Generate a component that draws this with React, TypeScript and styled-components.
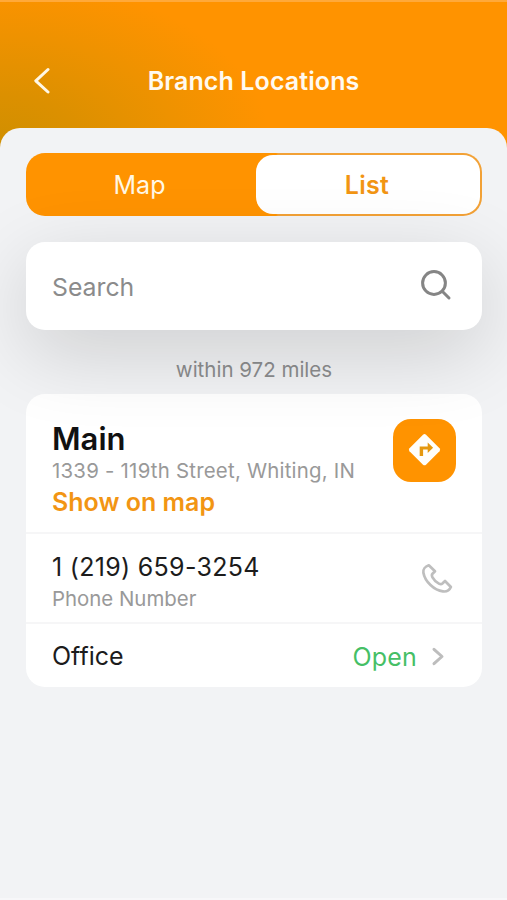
import React from "react";
import styled, { createGlobalStyle } from "styled-components";

const ORANGE = "#ff9300";

const GlobalStyle = createGlobalStyle`
  * { box-sizing: border-box; }
  body { margin: 0; background: #f2f3f5; font-family: Inter, "Liberation Sans", sans-serif; }
  button, input { font: inherit; border: 0; padding: 0; margin: 0; background: none; }
`;

const Screen = styled.div`
  height: 900px;
  overflow: hidden;
  display: flex;
  flex-direction: column;
  border-top: 2px solid #ffa93a;
  border-bottom: 2px solid #f7f7f9;
  background: radial-gradient(ellipse 270px 165px at 0 142px, #d08f00 0%, #dc9000 30%, #ee9200 65%, ${ORANGE} 100%) ${ORANGE};
`;

const Header = styled.header`
  height: 126px;
  flex: none;
  display: grid;
  grid-template-columns: 60px 1fr 60px;
  align-items: center;
  padding-top: 32px;
`;

const BackButton = styled.button`
  display: flex;
  justify-content: flex-start;
  padding-left: 32px;
`;

const Title = styled.h1`
  margin: 0;
  text-align: center;
  color: #fffaf0;
  font-size: 25px;
  font-weight: 600;
  letter-spacing: 0.1px;
  line-height: 30px;
`;

const Sheet = styled.main`
  flex: 1;
  padding: 25px 25px 0 26px;
  border-radius: 20px 20px 0 0;
  background: #f2f3f5;
`;

const Tabs = styled.div`
  height: 63px;
  display: grid;
  grid-template-columns: 228px 1fr;
  padding: 2px;
  border-radius: 19px;
  background: linear-gradient(90deg, ${ORANGE} 250px, #f2a136 252px);
`;

const Tab = styled.button<{ $active?: boolean }>`
  display: flex;
  align-items: center;
  justify-content: center;
  padding-right: ${(p) => (p.$active ? 2 : 5)}px;
  border-radius: 17px;
  font-size: 25px;
  color: ${(p) => (p.$active ? "#f29513" : "#fff8e6")};
  background: ${(p) => (p.$active ? "#fff" : "transparent")};
  font-weight: ${(p) => (p.$active ? 600 : 400)};
  letter-spacing: ${(p) => (p.$active ? 0.3 : 0)}px;
`;

const SearchBox = styled.label`
  position: relative;
  z-index: 1;
  height: 88px;
  margin-top: 26px;
  padding: 0 30px 0 26px;
  display: flex;
  align-items: center;
  justify-content: space-between;
  border-radius: 19px;
  background: #fff;
  box-shadow: 0 22px 80px rgba(0, 0, 0, 0.155);

  svg { margin-bottom: 2px; }
`;

const SearchText = styled.span`
  color: #8b8b8b;
  font-size: 24.8px;
  line-height: 30px;
  padding-top: 1px;
`;

const Radius = styled.p`
  margin: 0;
  height: 64px;
  padding-top: 14px;
  display: flex;
  align-items: center;
  justify-content: center;
  color: #8c8d8e;
  font-size: 20.5px;
`;

const Card = styled.section`
  height: 293px;
  border-radius: 19px;
  background: #fff;
`;

const Row = styled.div<{ $height: number; $divided?: boolean; $shift?: number }>`
  height: ${(p) => p.$height}px;
  padding: ${(p) => p.$shift ?? 0}px 26px 0;
  display: flex;
  align-items: center;
  justify-content: space-between;
  border-bottom: ${(p) => (p.$divided ? "2px solid #f6f6f7" : "0")};
`;

const Lines = styled.div`
  display: flex;
  flex-direction: column;
`;

const BranchName = styled.h2`
  margin: 0;
  color: #111;
  font-size: 31px;
  font-weight: 600;
  line-height: 36px;
`;

const Caption = styled.span<{ $spacing?: number }>`
  color: #999;
  font-size: 20.4px;
  letter-spacing: ${(p) => p.$spacing ?? 0}px;
  line-height: 28px;
`;

const MapLink = styled.a`
  color: #f29513;
  font-size: 25px;
  font-weight: 600;
  line-height: 35px;
`;

const Value = styled.span<{ $spacing?: number }>`
  color: #1c1c1c;
  font-size: 25px;
  letter-spacing: ${(p) => p.$spacing ?? 0}px;
  line-height: 35px;
`;

const Directions = styled.button`
  width: 63px;
  height: 63px;
  margin-top: -41px;
  display: grid;
  place-items: center;
  border-radius: 18px;
  background: ${ORANGE};
`;

const Status = styled.span`
  display: flex;
  align-items: center;
  gap: 14px;
  padding-right: 11px;
  color: #46bf66;
  font-size: 25px;
  letter-spacing: 0.2px;
`;

const PhoneSlot = styled.span`
  display: flex;
  padding: 0 2px 5px 0;
`;

const BackIcon = () => (
  <svg width="18" height="28" viewBox="0 0 18 28" fill="none" stroke="#fff7e6" strokeWidth="3" strokeLinecap="round" strokeLinejoin="round">
    <path d="M16 2.500 3.800 13.800 16 25" />
  </svg>
);

const SearchIcon = () => (
  <svg width="32" height="32" viewBox="0 0 32 32" fill="none" stroke="#858585" strokeWidth="3" strokeLinecap="round">
    <circle cx="14" cy="14" r="11.4" />
    <path d="m22.500 22.500 6.500 6.500" />
  </svg>
);

const DirectionsIcon = () => (
  <svg width="34" height="34" viewBox="0 0 34 34">
    <path d="M15 1.700q1.500-1.300 3 0l13.500 13.500q1.300 1.500 0 3L18 31.700q-1.500 1.300-3 0L1.500 18.200q-1.300-1.500 0-3z" fill="#fffefa" />
    <path d="M11.700 23v-9.600h8V9.500l5.400 5.300-5.400 5.300v-3.500h-4.600V23z" fill="#e5980d" />
  </svg>
);

const PhoneIcon = () => (
  <svg width="34" height="34" viewBox="0 0 34 34" fill="none" stroke="#bebebe" strokeWidth="2.7" strokeLinejoin="round">
    <path d="M8.800 3.300 15 9.300l-2.500 2.500c-1 1-.7 2.200 0 3.600 1.500 2.800 3.600 4.800 6.400 6.200 1.400.7 2.500.8 3.500-.1l2.600-2.500 5.900 6c-1.500 3.300-4.300 4.900-8 4.400C14.200 28.200 5 19.700 3.400 10.700 2.800 7.500 5.100 4.500 8.800 3.300Z" />
  </svg>
);

const ChevronIcon = () => (
  <svg width="14" height="20" viewBox="0 0 14 20" fill="none" stroke="#bdbdbd" strokeWidth="3" strokeLinecap="round" strokeLinejoin="round">
    <path d="m3 2.300 8 7.200-8 7.200" />
  </svg>
);

export default function App() {
  return (
    <>
      <GlobalStyle />
      <Screen>
        <Header>
          <BackButton aria-label="Back"><BackIcon /></BackButton>
          <Title>Branch Locations</Title>
        </Header>
        <Sheet>
          <Tabs>
            <Tab>Map</Tab>
            <Tab $active>List</Tab>
          </Tabs>
          <SearchBox>
            <SearchText>Search</SearchText>
            <SearchIcon />
          </SearchBox>
          <Radius>within 972 miles</Radius>
          <Card>
            <Row $height={140} $divided $shift={15}>
              <Lines>
                <BranchName>Main</BranchName>
                <Caption $spacing={0.23}>1339 - 119th Street, Whiting, IN</Caption>
                <MapLink>Show on map</MapLink>
              </Lines>
              <Directions aria-label="Directions"><DirectionsIcon /></Directions>
            </Row>
            <Row $height={90} $divided $shift={7}>
              <Lines>
                <Value $spacing={0.3}>1 (219) 659-3254</Value>
                <Caption>Phone Number</Caption>
              </Lines>
              <PhoneSlot><PhoneIcon /></PhoneSlot>
            </Row>
            <Row $height={63} $shift={2}>
              <Value>Office</Value>
              <Status>Open <ChevronIcon /></Status>
            </Row>
          </Card>
        </Sheet>
      </Screen>
    </>
  );
}
